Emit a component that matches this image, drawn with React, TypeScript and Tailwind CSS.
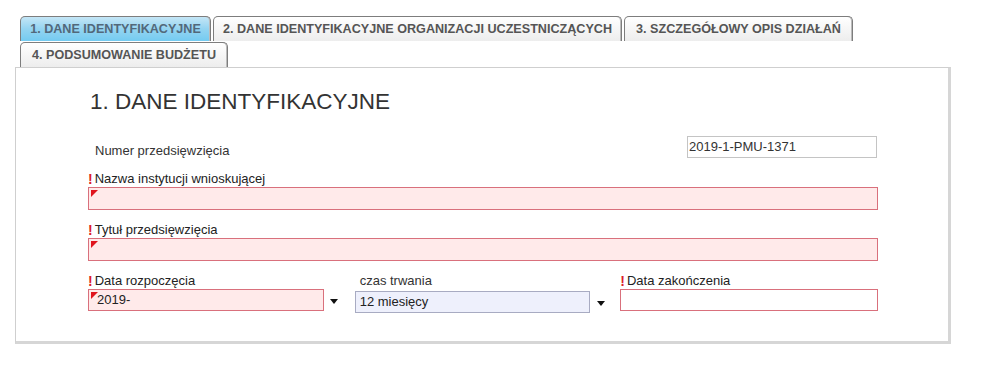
import React from "react";

const tabs = [
  { label: "1. DANE IDENTYFIKACYJNE", width: "w-[191px]", active: true },
  { label: "2. DANE IDENTYFIKACYJNE ORGANIZACJI UCZESTNICZĄCYCH", width: "w-[409px]", active: false },
  { label: "3. SZCZEGÓŁOWY OPIS DZIAŁAŃ", width: "w-[229px]", active: false },
  { label: "4. PODSUMOWANIE BUDŻETU", width: "w-[208px]", active: false },
];

function Req() {
  return <span className="mr-[2px] text-[14px] font-bold leading-none text-[#dc1f2b]">!</span>;
}

function Corner() {
  return (
    <span className="absolute left-[2px] top-[2px] h-[7px] w-[7px] bg-[#e0141e] [clip-path:polygon(0_0,100%_0,0_100%)]" />
  );
}

function Arrow() {
  return (
    <svg width="8" height="5" viewBox="0 0 8 5" className="shrink-0">
      <path d="M0 0 H8 L4 5 Z" fill="#111" />
    </svg>
  );
}

function RequiredInput({ value = "", corner = true, pink = true, className = "" }: { value?: string; corner?: boolean; pink?: boolean; className?: string }) {
  return (
    <div
      className={`relative flex h-[22px] items-center border border-[#d9707c] pl-[8px] text-[13px] text-[#222] ${
        pink ? "bg-[#ffeaea]" : "bg-white"
      } ${className}`}
    >
      {corner ? <Corner /> : null}
      {value}
    </div>
  );
}

function Label({ children, required = true, className = "" }: { children: React.ReactNode; required?: boolean; className?: string }) {
  return (
    <div className={`flex h-[16px] items-center text-[13px] leading-[16px] text-[#222] ${className}`}>
      {required ? <Req /> : null}
      {children}
    </div>
  );
}

export default function App() {
  return (
    <div className="min-h-[366px] bg-white pt-[16px] font-['Liberation_Sans',Arial,sans-serif]">
      <div className="ml-[20px] flex w-[931px] flex-wrap gap-x-[2px] gap-y-[1px]">
        {tabs.map((t) => (
          <div
            key={t.label}
            className={`flex h-[25px] items-center justify-center rounded-t-[5px] border border-b-0 border-[#7d7d7d] shadow-[inset_-1px_0_0_#bbb] text-[12.6px] font-bold ${t.width} ${
              t.active
                ? "bg-gradient-to-b from-[#c4e6f6] via-[#93d4f1] to-[#74cbf1] text-[#52687a]"
                : "bg-gradient-to-b from-white to-[#ededed] text-[#555]"
            }`}
          >
            {t.label}
          </div>
        ))}
      </div>

      <div className="ml-[15px] h-[277px] w-[936px] border-l border-t border-r-[3px] border-b-[3px] border-l-[#cfcfcf] border-t-[#cfcfcf] border-r-[#d6d6d6] border-b-[#d6d6d6] bg-white pl-[72px]">
        <div className="w-[790px]">
          <h1 className="mt-[22px] pl-[2px] text-[22.5px] leading-[24px] text-[#333]">1. DANE IDENTYFIKACYJNE</h1>

          <div className="mt-[22px] flex h-[22px] justify-between pr-[1px]">
            <span className="pl-[7px] pt-[7px] text-[13px] leading-[15px] text-[#333]">Numer przedsięwzięcia</span>
            <div className="flex h-[22px] w-[190px] items-center border border-[#c4c4c4] pl-[1px] text-[13px] text-[#333]">
              2019-1-PMU-1371
            </div>
          </div>

          <Label className="mt-[13px]">Nazwa instytucji wnioskującej</Label>
          <RequiredInput className="h-[23px]" />

          <Label className="mt-[12px]">Tytuł przedsięwzięcia</Label>
          <RequiredInput className="h-[23px]" />

          <div className="mt-[12px] flex">
            <div className="w-[267px]">
              <Label>Data rozpoczęcia</Label>
              <div className="flex items-center">
                <RequiredInput value="2019-" className="w-[236px]" />
                <span className="ml-[6px] mt-[2px]">
                  <Arrow />
                </span>
              </div>
            </div>
            <div className="w-[266px]">
              <Label required={false} className="pl-[5px] text-[#333]">
                czas trwania
              </Label>
              <div className="mt-[2px] flex items-center">
                <div className="flex h-[22px] w-[235px] items-center border border-[#a8abc2] bg-[#eef0fc] pl-[4px] text-[13px] text-[#222]">
                  12 miesięcy
                </div>
                <span className="ml-[7px] mt-[2px]">
                  <Arrow />
                </span>
              </div>
            </div>
            <div className="w-[258px]">
              <Label>Data zakończenia</Label>
              <RequiredInput corner={false} pink={false} />
            </div>
          </div>
        </div>
      </div>
    </div>
  );
}
